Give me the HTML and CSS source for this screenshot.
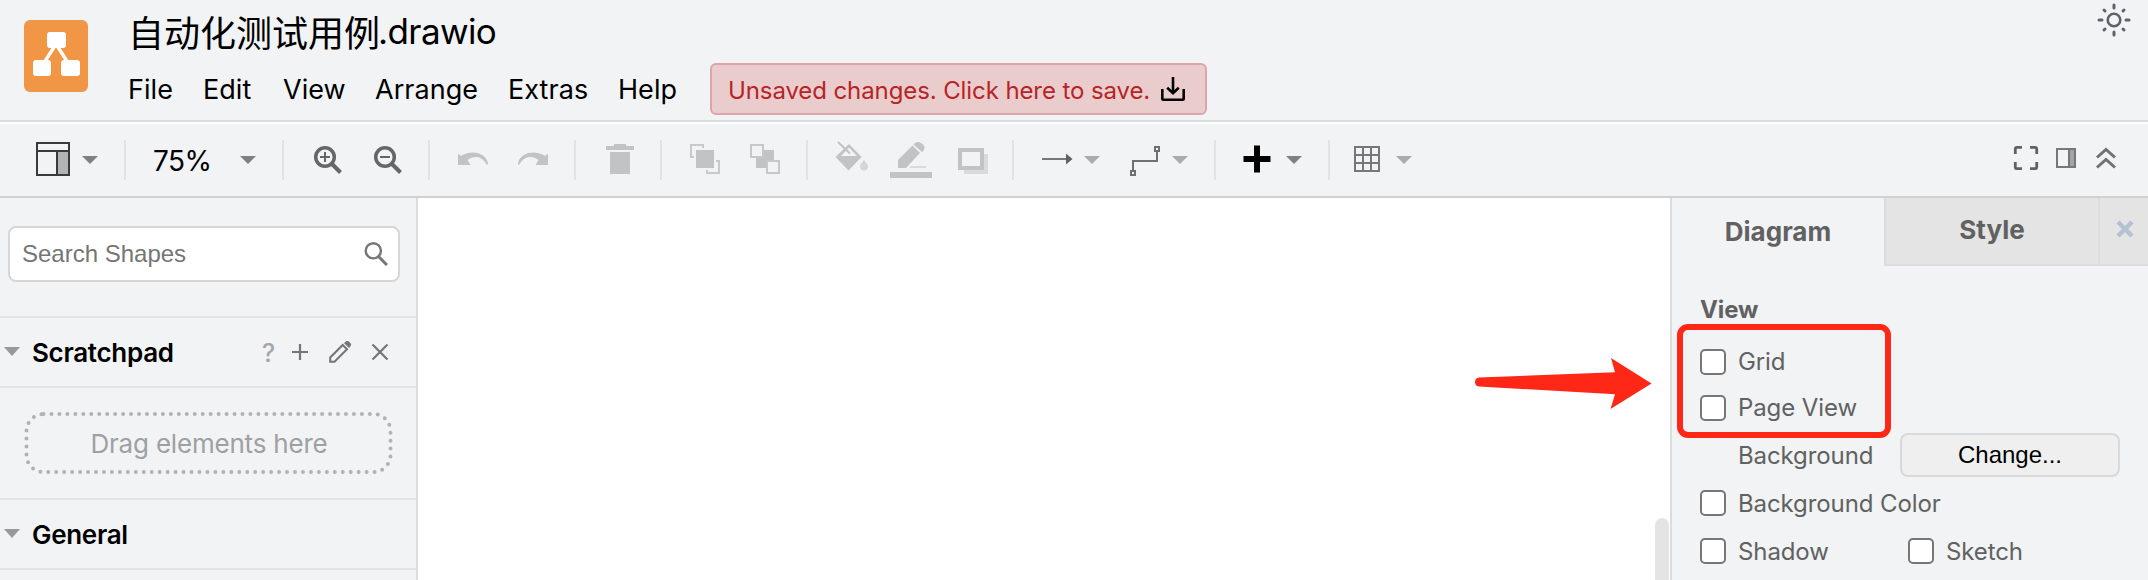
FILE: index.html
```html
<!DOCTYPE html>
<html lang="en">
<head>
<meta charset="utf-8">
<title>自动化测试用例.drawio</title>
<link rel="stylesheet" href="styles.css">
</head>
<body>
<div class="app">
  <header class="header">
    <svg class="logo" viewBox="0 0 64 72"><rect width="64" height="72" rx="6" fill="#f19645"/><path d="M32 24L18 46M32 24L46 46" stroke="#fff" stroke-width="3.4"/><g fill="#fff"><rect x="23" y="12" width="19" height="16" rx="3"/><rect x="9" y="40" width="18" height="16" rx="3"/><rect x="37" y="40" width="19" height="16" rx="3"/></g></svg>
    <div class="head-main">
      <div class="title"><span class="title-cjk">自动化测试用例</span><span class="title-ext">.drawio</span></div>
      <nav class="menu">
        <span class="menu-item m-file">File</span><span class="menu-item m-edit">Edit</span><span class="menu-item m-view">View</span><span class="menu-item m-arrange">Arrange</span><span class="menu-item m-extras">Extras</span><span class="menu-item m-help">Help</span>
        <div class="notice"><span class="notice-text">Unsaved changes. Click here to save.</span><svg class="notice-icon" viewBox="0 0 24 24" fill="none" stroke="#000" stroke-width="2.6"><path d="M1.3 12v9.5q0 1.2 1.2 1.2h19q1.2 0 1.2-1.2V12M12 0v16M6.2 10.8L12 16.2l5.8-5.4"/></svg></div>
      </nav>
    </div>
    <svg class="sun" viewBox="0 0 34 34" fill="none" stroke="#5f6368" stroke-width="3"><circle cx="17" cy="17" r="6.3" stroke-width="2.6"/><path stroke-linecap="round" d="M17 2v3M17 29v3M2 17h3M29 17h3M7 7l1 1M26 26l1 1M27 7l-1 1M8 26l-1 1"/></svg>
  </header>

  <div class="toolbar">
    <div class="group">
      <svg width="76" height="40" viewBox="0 140 76 40"><path d="M57 151h12v24H57z" fill="#b3b3b3"/><path d="M37 143h32v32H37zM37 151h32M57 151v24" fill="none" stroke="#383a3b" stroke-width="2"/></svg>
      <svg width="48" height="40" viewBox="76 140 48 40"><path d="M82 156h16l-8 8z" fill="#808080"/></svg>
    </div>
    <div class="group">
      <span class="zoom">75%</span>
      <svg width="50" height="40" viewBox="232 140 50 40"><path d="M240 156h16l-8 8z" fill="#808080"/></svg>
    </div>
    <div class="group">
      <svg width="74" height="40" viewBox="284 140 74 40" fill="none" stroke="#666"><circle cx="325" cy="157" r="9.3" stroke-width="3.5"/><path d="M331.500 163.500l9 9" stroke-width="4"/><path d="M320 157h10M325 152v10" stroke-width="2"/></svg>
      <svg width="70" height="40" viewBox="358 140 70 40" fill="none" stroke="#666"><circle cx="385" cy="157" r="9.300" stroke-width="3.5"/><path d="M391.500 163.500l9 9" stroke-width="4"/><path d="M380 157h10" stroke-width="2"/></svg>
    </div>
    <div class="group">
      <svg width="72" height="40" viewBox="430 140 72 40" fill="#c2c3c4"><path d="M458 153.500l3 2.500c8-6 24-5 27 7v1.500h-1.500c-4-8-12-10-19-4.500l3 5h-12.500z"/></svg>
      <svg width="72" height="40" viewBox="502 140 72 40" fill="#c2c3c4"><path d="M548 153.500l-3 2.500c-8-6-24-5-27 7v1.500h1.500c4-8 12-10 19-4.500l-3 5h12.500z"/></svg>
    </div>
    <div class="group">
      <svg width="84" height="40" viewBox="576 140 84 40" fill="#c2c3c4"><path d="M606 146h8v-2h12v2h8v4h-28zM610 152h20v22h-20z"/></svg>
    </div>
    <div class="group">
      <svg width="72" height="40" viewBox="662 140 72 40"><path d="M703 148v-3h-12v12h3M716 161h3v12h-12v-3" fill="none" stroke="#c8c9ca" stroke-width="2"/><path d="M696 150h18v18h-18z" fill="#c2c3c4"/></svg>
      <svg width="72" height="40" viewBox="734 140 72 40"><path d="M756 150h18v18h-18z" fill="#c2c3c4"/><path d="M751 145h12v12h-12zM767 161h12v12h-12z" fill="#f1f3f4" stroke="#c6c7c8" stroke-width="2"/></svg>
    </div>
    <div class="group">
      <svg width="72" height="40" viewBox="808 140 72 40"><path d="M849 144l12.500 13-13 13.500-13-13.500z" fill="#c2c3c4"/><path d="M849 147.500l-8 8.500h16z" fill="#f1f3f4"/><path d="M838 142l12 11.500" stroke="#c2c3c4" stroke-width="2"/><path d="M864 159.500c1 3 4 4 4 7a4 4 0 0 1-8 0c0-3 3-4 4-7" fill="#d5d6d7"/></svg>
      <svg width="64" height="40" viewBox="880 140 64 40"><path d="M898 160l14.500-14.500 7.500 7.500-14 15H898z" fill="#c2c3c4"/><path d="M913.500 144.500l1.500-1.500q3-2 6 0 5 3 3 7l-2 2z" fill="#c2c3c4"/><path d="M910 166h16v2h-16z" fill="#d9dadb"/><path d="M890 172h42v6h-42z" fill="#c2c3c4"/></svg>
      <svg width="68" height="40" viewBox="944 140 68 40"><path d="M964 154h24v20h-24z" fill="#d9dadb"/><path d="M960 150h22v18h-22z" fill="#f1f3f4" stroke="#c2c3c4" stroke-width="4"/></svg>
    </div>
    <div class="group">
      <svg width="64" height="40" viewBox="1014 140 64 40"><path d="M1042 159h25" stroke="#777" stroke-width="2"/><path d="M1066 153.500l6.500 5.500-6.500 5.500z" fill="#606162"/></svg>
      <svg width="32" height="40" viewBox="1078 140 32 40"><path d="M1084 156h16l-8 8z" fill="#aaabab"/></svg>
      <svg width="56" height="40" viewBox="1110 140 56 40" fill="none" stroke="#6f7071" stroke-width="2"><path d="M1133 170v-9h24v-10M1131 171h4v4h-4zM1155 147h4v4h-4z"/></svg>
      <svg width="48" height="40" viewBox="1166 140 48 40"><path d="M1172 156h16l-8 8z" fill="#aaabab"/></svg>
    </div>
    <div class="group">
      <svg width="62" height="40" viewBox="1216 140 62 40"><path d="M1243.500 159h27M1257 145.500v27" stroke="#000" stroke-width="6"/></svg>
      <svg width="50" height="40" viewBox="1278 140 50 40"><path d="M1286 156h16l-8 8z" fill="#808080"/></svg>
    </div>
    <div class="group group-last">
      <svg width="58" height="40" viewBox="1330 140 58 40" fill="none" stroke="#777" stroke-width="2"><path d="M1355 147h24v24h-24zM1363 147v24M1371 147v24M1355 155h24M1355 163h24"/></svg>
      <svg width="42" height="40" viewBox="1388 140 42 40"><path d="M1396 156h16l-8 8z" fill="#aaabab"/></svg>
    </div>
    <div class="view-tools">
      <svg width="40" height="40" viewBox="2006 140 40 40" fill="none" stroke="#606264" stroke-width="2.8"><path d="M2022 147.300h-5q-1.700 0-1.700 1.700v5M2030 147.300h5q1.700 0 1.700 1.700v5M2015.300 162v5q0 1.700 1.700 1.700h5M2036.700 162v5q0 1.700-1.700 1.700h-5"/></svg>
      <svg width="40" height="40" viewBox="2046 140 40 40" stroke="#777" stroke-width="2"><path d="M2057 149h18v18h-18z" fill="none"/><path d="M2069 149h6v18h-6z" fill="#a3a5a5"/></svg>
      <svg width="62" height="40" viewBox="2086 140 62 40" fill="none" stroke="#707172" stroke-width="3"><path d="M2097 157.500l9-8 9 8M2097 167.500l9-8 9 8"/></svg>
    </div>
  </div>

  <main class="work">
    <aside class="sidebar">
      <div class="search-wrap"><div class="search"><span>Search Shapes</span><svg width="24" height="24" viewBox="0 0 24 24" fill="none" stroke="#777"><circle cx="9.300" cy="8.800" r="7.600" stroke-width="2.4"/><path d="M14.500 14.500L23 23" stroke-width="3"/></svg></div></div>
      <div class="section">
        <svg class="tri" viewBox="0 0 16 9"><path d="M0 0h16L8 9z" fill="#999"/></svg>
        <span class="section-name s-scratch">Scratchpad</span>
        <span class="help">?</span>
        <svg class="scratch-tools" width="100" height="26" viewBox="290 339 100 26" fill="none" stroke="#737577" stroke-width="2.2"><path d="M292 352h16M300 344v16M372.500 344.500l15 15M387.500 344.500l-15 15"/><path d="M330.200 361.800v-4.300l12.500-12.500 4.300 4.300-12.500 12.500z" stroke-width="2"/><path d="M344.500 343l2-1.500q1.500-.5 3 1t1 3l-1.500 2z" fill="#737577" stroke-width="1"/></svg>
      </div>
      <div class="drop-wrap"><div class="drop"><svg class="drop-border" viewBox="0 0 370 64"><rect x="2.500" y="3" width="364" height="58" rx="17" fill="none" stroke="#b1b2b3" stroke-width="4" stroke-linecap="round" stroke-dasharray="0 7.960"/></svg><span>Drag elements here</span></div></div>
      <div class="section">
        <svg class="tri" viewBox="0 0 16 9"><path d="M0 0h16L8 9z" fill="#999"/></svg>
        <span class="section-name s-general">General</span>
      </div>
    </aside>

    <section class="canvas">
      <svg class="arrow" viewBox="1475 358 177 52"><path d="M1479 377.500L1615 372.300l-4-14.300 40.500 25.500-41 25.500 4.500-14.700-136-7.800q-4-.5-4-4.500t4-4.500z" fill="#ff2716"/></svg>
      <div class="scroll-thumb"></div>
    </section>

    <aside class="format">
      <div class="tabs">
        <div class="tab tab-active">Diagram</div>
        <div class="tab tab-style">Style</div>
        <div class="tab tab-close"><svg width="18" height="18" viewBox="0 0 18 18"><path d="M2 2l14 14M16 2L2 16" stroke="#b3c2d3" stroke-width="4.500"/></svg></div>
      </div>
      <div class="options">
        <h2 class="options-title">View</h2>
        <div class="opt r-grid"><i class="check"></i><span>Grid</span></div>
        <div class="opt r-page"><i class="check"></i><span>Page View</span></div>
        <div class="opt r-bg"><span class="bg-label">Background</span><button class="change">Change...</button></div>
        <div class="opt r-color"><i class="check"></i><span>Background Color</span></div>
        <div class="opt r-shadow"><i class="check"></i><span class="shadow-label">Shadow</span><i class="check"></i><span>Sketch</span></div>
        <div class="highlight"></div>
      </div>
    </aside>
  </main>
</div>
</body>
</html>
```

FILE: styles.css
```css
* { box-sizing: border-box; }
body { margin: 0; font-family: Inter, "Noto Sans CJK SC", sans-serif; color: #000; }
svg { display: block; flex: none; }
.app { width: 2148px; height: 580px; overflow: hidden; display: flex; flex-direction: column; background: #f1f3f4; }

.header { height: 124px; flex: none; display: flex; padding-left: 24px; background: #f1f3f5; border-bottom: 2px solid #fff; box-shadow: inset 0 -2px #dadce0; }
.logo { width: 64px; height: 72px; margin-top: 20px; }
.head-main { flex: 1; padding-left: 40px; }
.title { height: 63px; display: flex; line-height: 62px; font-size: 35px; white-space: nowrap; }
.title-cjk { width: 250px; font-family: "Noto Sans CJK SC", sans-serif; font-size: 36px; }
.title-ext { letter-spacing: -0.6px; line-height: 63px; }
.menu { display: flex; height: 52px; font-size: 27px; line-height: 54px; letter-spacing: 0.05px; white-space: nowrap; }
.menu-item { flex: none; }
.m-file { width: 75px; }
.m-edit { width: 80px; }
.m-view { width: 92px; }
.m-arrange { width: 133px; }
.m-extras { width: 110px; }
.m-help { width: 92px; }
.notice { width: 497px; height: 52px; display: flex; padding-left: 16px; background: #ebcccd; border: 2px solid #dda4ac; border-radius: 6px; color: #b62426; font-size: 24px; line-height: 52px; }
.notice-text { width: 433px; letter-spacing: -0.1px; }
.notice-icon { width: 24px; height: 24px; margin-top: 12px; }
.sun { width: 34px; height: 34px; margin: 3px 17px 0 0; }

.toolbar { height: 74px; flex: none; display: flex; align-items: center; border-bottom: 2px solid #d0d1d2; background: #f1f3f5; }
.group { display: flex; height: 40px; border-right: 2px solid #e1e3e4; }
.group-last { border-right: 0; }
.zoom { width: 106px; padding-left: 27px; font-size: 28px; line-height: 43px; letter-spacing: -0.5px; }
.view-tools { display: flex; margin-left: auto; }

.work { display: flex; height: 382px; }
.sidebar { width: 418px; flex: none; border-right: 2px solid #dadce0; background: #f1f3f5; }
.search-wrap { height: 120px; padding: 28px 0 0 8px; border-bottom: 2px solid #e2e4e6; }
.search { width: 392px; height: 56px; display: flex; align-items: center; justify-content: space-between; padding: 0 10px 0 12px; background: #fff; border: 2px solid #d6d6d7; border-radius: 8px; font-family: "Liberation Sans", Arial, sans-serif; font-size: 24px; color: #757575; }
.search svg { margin-bottom: 1px; }
.section { height: 70px; display: flex; align-items: center; padding-left: 4px; border-bottom: 2px solid #e2e4e6; }
.tri { width: 16px; height: 9px; margin-bottom: 1px; }
.section-name { margin-left: 12px; font-size: 26px; font-weight: 600; line-height: 68px; padding-top: 2px; }
.s-scratch { width: 230px; letter-spacing: -0.3px; }
.s-general { letter-spacing: -0.3px; }
.help { width: 28px; font-size: 25px; font-weight: 500; color: #a3a5a6; padding-top: 2px; }
.drop-wrap { height: 112px; padding: 23px 0 0 24px; border-bottom: 2px solid #e2e4e6; }
.drop { width: 370px; height: 64px; display: grid; place-items: center; color: #9fa0a1; font-size: 26px; letter-spacing: -0.2px; }
.drop-border, .drop span { grid-area: 1 / 1; }
.drop-border { width: 370px; height: 64px; }

.canvas { flex: 1; position: relative; background: #fff; }
.arrow { position: absolute; left: 1057px; top: 160px; width: 177px; height: 52px; }
.scroll-thumb { position: absolute; right: 1px; top: 320px; width: 14px; height: 90px; border-radius: 7px; background: #e4e4e4; }

.format { width: 478px; flex: none; border-left: 2px solid #dadce0; background: #f1f3f5; color: #616161; }
.tabs { display: flex; height: 68px; font-size: 26px; font-weight: 700; text-align: center; }
.tab { line-height: 64px; }
.tab-active { width: 212px; line-height: 68px; }
.tab-style { width: 214px; background: #e4e4e4; border-left: 2px solid #dadce0; border-bottom: 2px solid #dadce0; }
.tab-close { width: 50px; background: #e4e4e4; border-left: 2px solid #dadce0; border-bottom: 2px solid #dadce0; padding: 22px 0 0 16px; }
.options { position: relative; padding: 27px 0 0 28px; font-size: 24px; letter-spacing: -0.1px; }
.options-title { margin: 0; height: 34px; font-size: 24px; line-height: 34px; font-weight: 700; }
.opt { display: flex; align-items: center; }
.check { width: 26px; height: 26px; margin-right: 12px; flex: none; border: 2px solid #767676; border-radius: 5px; background: #fff; }
.r-grid { height: 46px; margin-top: 12px; }
.r-page { height: 46px; }
.r-grid span, .r-page span { margin-bottom: 2px; }
.r-bg { height: 48px; padding-left: 38px; }
.bg-label { width: 162px; }
.change { width: 220px; height: 44px; padding: 0; border: 2px solid #d8d9da; border-radius: 8px; background: #efefef; font: 24px "Liberation Sans", Arial, sans-serif; color: #000; }
.r-color { height: 48px; }
.r-shadow { height: 48px; }
.shadow-label { width: 170px; }
.highlight { position: absolute; left: 5px; top: 58px; width: 214px; height: 114px; border: 6px solid #ff2716; border-radius: 11px; }
```
